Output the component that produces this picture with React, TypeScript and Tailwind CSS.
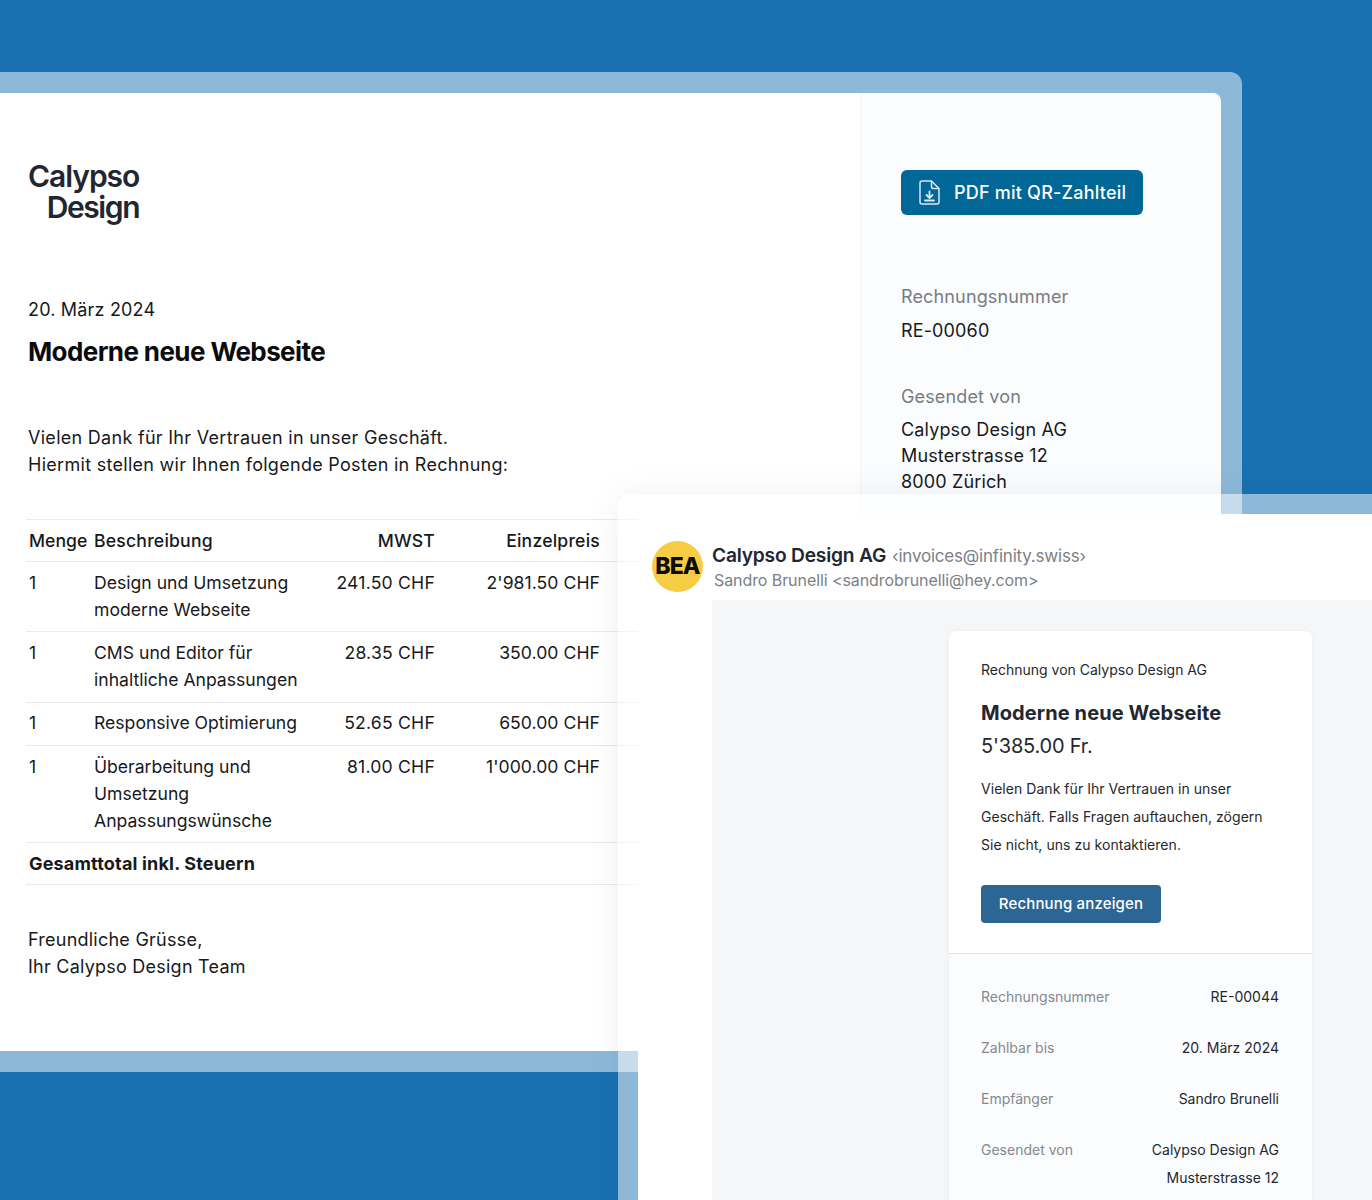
import { ReactNode } from "react";

const inter = "font-['Inter','Liberation_Sans',sans-serif]";

const posten = [
  { menge: "1", text: ["Design und Umsetzung", "moderne Webseite"], mwst: "241.50 CHF", preis: "2'981.50 CHF" },
  { menge: "1", text: ["CMS und Editor für", "inhaltliche Anpassungen"], mwst: "28.35 CHF", preis: "350.00 CHF" },
  { menge: "1", text: ["Responsive Optimierung"], mwst: "52.65 CHF", preis: "650.00 CHF" },
  { menge: "1", text: ["Überarbeitung und", "Umsetzung", "Anpassungswünsche"], mwst: "81.00 CHF", preis: "1'000.00 CHF" },
];

const spalten = "grid grid-cols-[65px_1fr_110px_165px] pl-[3px] pr-[38px] border-t border-[#e9eaec] text-[17.6px] tracking-normal";

function Rechnung() {
  return (
    <div className="mt-[72px] w-[1242px] h-[1000px] flex border-[21px] border-l-0 border-white/50 bg-white/50 bg-clip-padding rounded-tr-[12px] text-[18px] text-[#17191c] tracking-[0.01em]">
      <div className="flex-1 bg-white pt-[68px]">
        <div className="ml-[28px] w-fit text-right font-semibold text-[30px] leading-[31px] tracking-[-0.035em] text-[#23262f]">
          <div>Calypso</div>
          <div className="tracking-[-0.046em]">Design</div>
        </div>
        <p className="ml-[28px] mt-[73px] leading-[27px]">20. März 2024</p>
        <h1 className="ml-[28px] mt-[11px] text-[26px] leading-[36px] font-bold tracking-[-0.023em] text-[#0b0c0e]">Moderne neue Webseite</h1>
        <p className="ml-[28px] mt-[54px] leading-[27px] tracking-[0.016em]">
          Vielen Dank für Ihr Vertrauen in unser Geschäft.
          <br />
          Hiermit stellen wir Ihnen folgende Posten in Rechnung:
        </p>
        <div className="ml-[26px] mt-[41px] w-[612px]">
          <div className={`${spalten} py-[7px] leading-[27px] font-medium`}>
            <span>Menge</span>
            <span className="tracking-[0.012em]">Beschreibung</span>
            <span className="text-right tracking-[0.012em]">MWST</span>
            <span className="text-right tracking-[0.012em]">Einzelpreis</span>
          </div>
          {posten.map((p, i) => (
            <div key={i} className={`${spalten} pt-[6.8px] pb-[8.5px] leading-[27px]`}>
              <span>{p.menge}</span>
              <span>
                {p.text.map((t) => (
                  <div key={t}>{t}</div>
                ))}
              </span>
              <span className="text-right tracking-[0.012em]">{p.mwst}</span>
              <span className="text-right tracking-[0.003em]">{p.preis}</span>
            </div>
          ))}
          <div className="pl-[3px] pt-[7px] pb-[7px] border-y border-[#e9eaec] leading-[27px] font-bold">Gesamttotal inkl. Steuern</div>
        </div>
        <p className="ml-[28px] mt-[41px] leading-[27px] tracking-[0.013em]">
          Freundliche Grüsse,
          <br />
          Ihr Calypso Design Team
        </p>
      </div>
      <div className="w-[361px] shrink-0 bg-[#fbfcfe] border-l border-[#f1f3f6] rounded-tr-[8px] pl-[40px] pt-[77px] tracking-[0.008em]">
        <div className="w-[242px] h-[45px] flex items-center gap-[14px] pl-[18px] rounded-[6px] bg-[#006797] text-white font-medium text-[18px] tracking-[0.012em]">
          <svg width="21" height="25" viewBox="0 0 21 25" fill="none" stroke="currentColor" strokeWidth="1.5" strokeLinecap="round" strokeLinejoin="round" className="text-[#dbe8f0]">
            <path d="M3 1h9.5L20 8.5V22a2 2 0 0 1-2 2H3a2 2 0 0 1-2-2V3a2 2 0 0 1 2-2z" />
            <path d="M12.5 1v6a1.5 1.5 0 0 0 1.5 1.5h6" />
            <path d="M10.5 11.5v6M7.5 15l3 3 3-3M6 20.5h9" strokeWidth="1.8" />
          </svg>
          <span>PDF mit QR-Zahlteil</span>
        </div>
        <p className="mt-[69px] leading-[26px] text-[#787c82]">Rechnungsnummer</p>
        <p className="mt-[8px] leading-[26px]">RE-00060</p>
        <p className="mt-[40px] leading-[26px] text-[#787c82]">Gesendet von</p>
        <p className="mt-[7px] leading-[26px]">
          Calypso Design AG
          <br />
          Musterstrasse 12
          <br />
          8000 Zürich
        </p>
      </div>
    </div>
  );
}

function Detail({ label, children }: { label: string; children: ReactNode }) {
  return (
    <div className="flex justify-between mb-[23px] leading-[28px]">
      <span className="text-[#85898f]">{label}</span>
      <span className="text-right text-[#25282e]">{children}</span>
    </div>
  );
}

function Email() {
  return (
    <div className="absolute left-[618px] top-[494px] w-[794px] h-[760px] border-[20px] border-white/50 bg-clip-padding rounded-[12px] shadow-[0_0_36px_rgba(20,30,50,0.06)]">
      <div className="h-full bg-white rounded-[2px]">
        <div className="flex pl-[14px] pt-[27px] h-[86px]">
          <div className="w-[51px] h-[51px] rounded-full bg-[#f6cc45] flex items-center justify-center font-extrabold text-[23px] tracking-[-0.04em] text-[#0c0c0c]">BEA</div>
          <div className="ml-[9px]">
            <div className="leading-[28px] whitespace-nowrap text-[#7b7f86] text-[17px] tracking-[-0.012em]">
              <span className="font-semibold text-[19.2px] text-[#23262f] mr-[6px]">Calypso Design AG</span>‹invoices@infinity.swiss›
            </div>
            <div className="ml-[2px] leading-[21px] text-[16px] text-[#7b7f86] tracking-[-0.005em]">Sandro Brunelli &lt;sandrobrunelli@hey.com&gt;</div>
          </div>
        </div>
        <div className="ml-[74px] h-[700px] bg-[#f5f6f8] pt-[31px] pl-[237px]">
          <div className="w-[363px] h-[640px] rounded-[8px] bg-[#fbfcfe] text-[14px] text-[#25282e] shadow-[0_0_6px_rgba(30,40,60,0.04)]">
            <div className="bg-white rounded-t-[8px] px-[32px] pt-[28px] h-[323px] border-b border-[#e0e3e8]">
              <p className="leading-[22px]">Rechnung von Calypso Design AG</p>
              <h2 className="mt-[18px] text-[20px] leading-[28px] font-bold tracking-[0.005em] text-[#23262f]">Moderne neue Webseite</h2>
              <p className="mt-[5px] text-[20px] leading-[28px] tracking-[-0.01em]">5'385.00 Fr.</p>
              <p className="mt-[15px] leading-[28px] tracking-[0.003em]">
                Vielen Dank für Ihr Vertrauen in unser
                <br />
                Geschäft. Falls Fragen auftauchen, zögern
                <br />
                Sie nicht, uns zu kontaktieren.
              </p>
              <div className="mt-[26px] w-[180px] h-[38px] rounded-[4px] bg-[#2c6695] flex items-center justify-center text-white text-[15px] font-[450] tracking-[0.01em]">Rechnung anzeigen</div>
            </div>
            <div className="pl-[32px] pr-[33px] pt-[29px]">
              <Detail label="Rechnungsnummer">RE-00044</Detail>
              <Detail label="Zahlbar bis">20. März 2024</Detail>
              <Detail label="Empfänger">Sandro Brunelli</Detail>
              <Detail label="Gesendet von">
                Calypso Design AG
                <br />
                Musterstrasse 12
              </Detail>
            </div>
          </div>
        </div>
      </div>
    </div>
  );
}

export default function App() {
  return (
    <div className={`relative w-[1372px] h-[1200px] overflow-hidden bg-[#1a71b1] ${inter}`}>
      <Rechnung />
      <Email />
    </div>
  );
}
